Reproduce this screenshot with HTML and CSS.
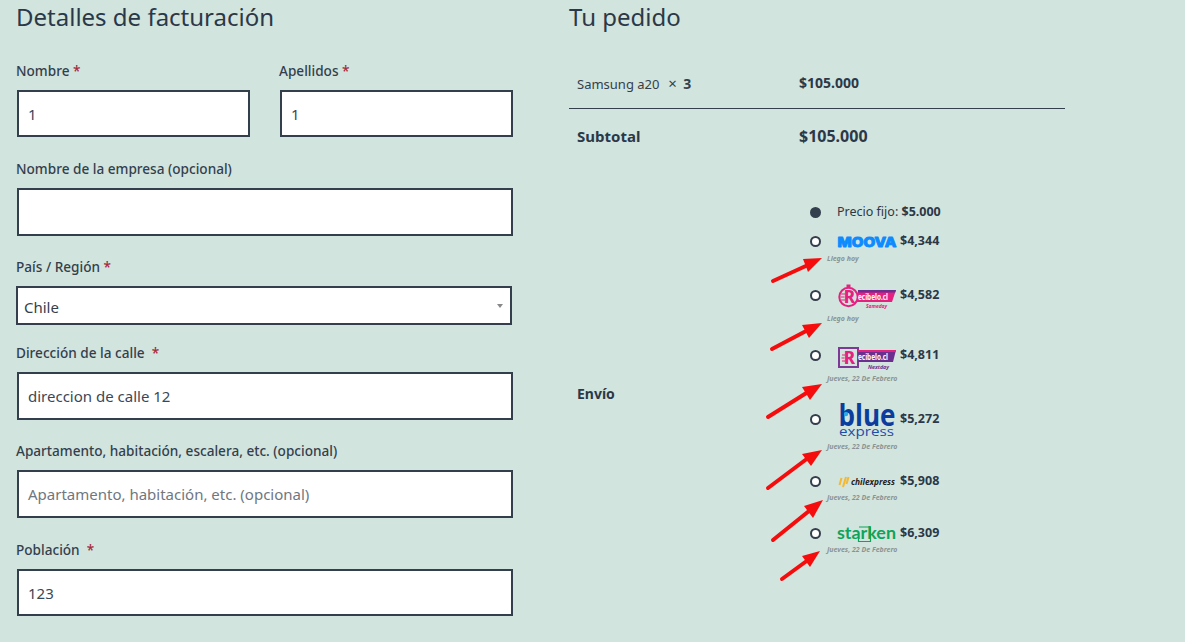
FILE: index.html
```html
<!DOCTYPE html>
<html lang="es">
<head>
<meta charset="utf-8">
<title>Finalizar compra</title>
<link rel="stylesheet" href="styles.css">
</head>
<body>
<main class="page">
  <section class="billing">
    <h2 class="title">Detalles de facturación</h2>
    <div class="fields">
      <div class="pair">
        <div class="field"><label>Nombre <span class="req">*</span></label><div class="input">1</div></div>
        <div class="field"><label>Apellidos <span class="req">*</span></label><div class="input">1</div></div>
      </div>
      <div class="field"><label>Nombre de la empresa (opcional)</label><div class="input"></div></div>
      <div class="field field-select"><label>País / Región <span class="req">*</span></label>
        <div class="select"><span>Chile</span><i class="caret"></i></div></div>
      <div class="field"><label>Dirección de la calle &nbsp;<span class="req">*</span></label><div class="input">direccion de calle 12</div></div>
      <div class="field"><label>Apartamento, habitación, escalera, etc. (opcional)</label><div class="input placeholder">Apartamento, habitación, etc. (opcional)</div></div>
      <div class="field"><label>Población &nbsp;<span class="req">*</span></label><div class="input">123</div></div>
    </div>
  </section>

  <section class="order">
    <h2 class="title">Tu pedido</h2>
    <table class="summary">
      <tr class="row-item">
        <td class="c-name">Samsung a20 &nbsp;<span class="times">×</span> <strong>3</strong></td>
        <td class="c-val"><strong>$105.000</strong></td>
      </tr>
      <tr class="row-sub">
        <th>Subtotal</th>
        <td class="c-val"><strong>$105.000</strong></td>
      </tr>
      <tr class="row-ship">
        <th>Envío</th>
        <td class="c-ship">
          <ul class="methods">
            <li class="m m-fixed">
              <div class="m-row"><span class="radio on"></span><span class="fixed">Precio fijo: <b>$5.000</b></span></div>
            </li>
            <li class="m m-moova">
              <div class="m-row"><span class="radio"></span>
                <svg class="logo" viewBox="0 0 60 20" width="60" height="20"><text class="t-moova" x="0.5" y="15.5" textLength="59" lengthAdjust="spacingAndGlyphs">MOOVA</text></svg>
                <span class="price">$4,344</span></div>
              <p class="eta">Llego hoy</p>
            </li>
            <li class="m m-same">
              <div class="m-row"><span class="radio"></span>
                <svg class="logo" viewBox="0 0 60 26" width="60" height="26">
                  <polygon points="21,8 59,8 55,20 20,20" fill="#e5217f"/>
                  <polygon points="21,8 59,8 58.2,10.5 21,10.5" fill="#6b2f8f"/>
                  <circle cx="11.5" cy="15" r="9.2" fill="#d2e4de" stroke="#e5217f" stroke-width="2"/>
                  <rect x="9.5" y="2.5" width="4" height="2.5" fill="#e5217f"/>
                  <path d="M4 12h4M3.500 15h4M4 18h4" fill="none" stroke="#e5217f" stroke-width="1"/>
                  <text class="t-r pink" x="12.500" y="21" text-anchor="middle">R</text>
                  <text class="t-rec" x="21" y="18" textLength="30" lengthAdjust="spacingAndGlyphs">ecibelo.cl</text>
                  <text class="t-day pink" x="29" y="26" textLength="21" lengthAdjust="spacingAndGlyphs">Sameday</text>
                </svg>
                <span class="price">$4,582</span></div>
              <p class="eta">Llego hoy</p>
            </li>
            <li class="m m-next">
              <div class="m-row"><span class="radio"></span>
                <svg class="logo" viewBox="0 0 60 26" width="60" height="26">
                  <rect x="2" y="6" width="19" height="19" fill="none" stroke="#7c3a96" stroke-width="2"/>
                  <polygon points="21,8 59,8 56,20 21,20" fill="#6b2f8f"/>
                  <polygon points="21,8 59,8 58.500,10 21,10" fill="#e5217f"/>
                  <path d="M5 13h3M4.500 16h3M5 19h3" fill="none" stroke="#e5217f" stroke-width="1"/>
                  <text class="t-r pink" x="12.500" y="22" text-anchor="middle">R</text>
                  <text class="t-rec" x="21" y="18" textLength="30" lengthAdjust="spacingAndGlyphs">ecibelo.cl</text>
                  <text class="t-day purple" x="31" y="27" textLength="21" lengthAdjust="spacingAndGlyphs">Nextday</text>
                </svg>
                <span class="price">$4,811</span></div>
              <p class="eta">Jueves, 22 De Febrero</p>
            </li>
            <li class="m m-blue">
              <div class="m-row"><span class="radio"></span>
                <svg class="logo" viewBox="0 0 60 38" width="60" height="38">
                  <text class="t-blue" x="1.500" y="26" textLength="57" lengthAdjust="spacingAndGlyphs">blue</text>
                  <circle cx="9" cy="14" r="2.200" fill="#29a9e8"/>
                  <text class="t-express" x="2" y="35.500" textLength="55" lengthAdjust="spacingAndGlyphs">express</text>
                </svg>
                <span class="price">$5,272</span></div>
              <p class="eta">Jueves, 22 De Febrero</p>
            </li>
            <li class="m m-chile">
              <div class="m-row"><span class="radio"></span>
                <svg class="logo" viewBox="0 0 60 20" width="60" height="20">
                  <path d="M2.500 14l2-7M6 16l3-10M9.500 13l2-7" fill="none" stroke="#f5b82e" stroke-width="2"/>
                  <text class="t-chile" x="14" y="13.500" textLength="44" lengthAdjust="spacingAndGlyphs">chilexpress</text>
                </svg>
                <span class="price">$5,908</span></div>
              <p class="eta">Jueves, 22 De Febrero</p>
            </li>
            <li class="m m-stark">
              <div class="m-row"><span class="radio"></span>
                <svg class="logo" viewBox="0 0 60 20" width="60" height="20">
                  <text class="t-stark" x="0" y="16" textLength="59" lengthAdjust="spacingAndGlyphs">starken</text>
                  <path d="M22 4H33.500V18.500H21.500V15" fill="none" stroke="#0ea45a" stroke-width="1.200"/>
                </svg>
                <span class="price">$6,309</span></div>
              <p class="eta">Jueves, 22 De Febrero</p>
            </li>
          </ul>
        </td>
      </tr>
    </table>
  </section>
</main>

<svg class="arrows" viewBox="0 0 1185 642" width="1185" height="642" aria-hidden="true">
  <g class="shaft">
    <path d="M773 281L808 265"/>
    <path d="M772 349L808 330"/>
    <path d="M768 417L808 392"/>
    <path d="M768 488L808 458"/>
    <path d="M773 540L809 511"/>
    <path d="M782 579L808 560"/>
  </g>
  <g class="head">
    <polygon points="822,258 803,259 808,272"/>
    <polygon points="822,323 802,325 809,338"/>
    <polygon points="822,384 802,387 810,400"/>
    <polygon points="822,450 802,454 811,466"/>
    <polygon points="823,500 804,506 813,518"/>
    <polygon points="820,551 802,556 810,567"/>
  </g>
</svg>
</body>
</html>
```
FILE: styles.css
```css
* { box-sizing: border-box; }
html, body { margin: 0; height: 642px; overflow: hidden; }
body {
  position: relative;
  background: #d2e4de;
  color: #333f4d;
  font-family: "Noto Sans", "Open Sans", sans-serif;
  font-size: 14px;
}
.page { display: flex; padding-left: 16px; }
.billing { width: 553px; flex: none; }
.order { width: 496px; flex: none; }
.title {
  margin: 0;
  height: 36px;
  font-size: 24px;
  font-weight: 400;
  line-height: 34px;
  color: #2b3848;
}
.fields { display: flex; flex-direction: column; width: 497px; padding-top: 23.9px; }
.pair { display: grid; grid-template-columns: 234px 234px; column-gap: 29px; }
.field { display: flex; flex-direction: column; margin-bottom: 20.85px; }
.field-select { margin-bottom: 16.9px; }
.field label {
  height: 24px;
  margin-bottom: 6px;
  font-size: 13.6px;
  font-weight: 500;
  line-height: 22px;
}
.req { color: #a5283b; }
.input {
  height: 47.4px;
  margin-left: 1px;
  padding-left: 9px;
  background: #fff;
  border: 2px solid #333f4d;
  font-size: 15px;
  line-height: 45px;
  color: #3c4756;
}
.placeholder { color: #6f7780; }
.select {
  display: flex;
  align-items: center;
  justify-content: space-between;
  height: 39px;
  width: 496px;
  padding: 2px 7px 0 6px;
  background: #fff;
  border: 2px solid #333f4d;
  font-size: 15px;
}
.caret {
  margin-top: -2px;
  border-top: 4px solid #888;
  border-left: 3px solid transparent;
  border-right: 3px solid transparent;
}
.summary { width: 496px; margin-top: 24px; border-collapse: collapse; table-layout: fixed; }
.summary th { width: 222px; padding: 0 0 0 8px; text-align: left; font-size: 14px; font-weight: 700; color: #2b3848; }
.summary td { padding: 0; }
.row-item { height: 48px; border-bottom: 1px solid #333f4d; }
.summary .c-name { width: 222px; padding: 0 0 2px 8px; font-size: 13px; }
.times { margin-left: 2px; margin-right: 3px; font-size: 15px; }
.c-name strong { font-size: 14px; font-weight: 700; }
.summary .c-val { padding-left: 8px; color: #2b3848; }
.summary .row-item .c-val { font-size: 14px; padding-bottom: 2px; }
.row-sub { height: 52px; }
.summary .row-sub th { font-size: 15px; padding-top: 4px; }
.summary .row-sub .c-val { font-size: 16px; padding-top: 4px; }
.row-ship { height: 466px; }
.c-ship { vertical-align: top; }
.methods { list-style: none; margin: 0; padding: 42px 0 0 19px; }
.m-row { display: flex; align-items: center; }
.radio {
  flex: none;
  width: 11px;
  height: 11px;
  margin-right: 16px;
  background: #fff;
  border: 2px solid #333f4d;
  border-radius: 50%;
}
.radio.on { background: #333f4d; }
.fixed { font-size: 12.5px; color: #2b3848; line-height: 20px; }
.logo { flex: none; display: block; margin-right: 3px; overflow: visible; }
.price { font-size: 12.5px; font-weight: 700; color: #2b3848; line-height: 14px; }
.eta {
  margin: 1px 0 0 17px;
  height: 10px;
  font-size: 7px;
  line-height: 12px;
  font-style: italic;
  font-weight: 700;
  color: #8a9494;
  white-space: nowrap;
}
.m-moova { margin-top: 9px; }
.m-moova .eta { margin-top: 2px; }
.m-same { margin-top: 19px; }
.m-same .eta { margin-top: 5px; }
.m-next { margin-top: 19px; }
.m-next .eta { margin-top: 5px; }
.m-blue { margin-top: 17px; }
.m-blue .eta { margin-top: 3px; }
.m-chile { margin-top: 20px; }
.m-stark { margin-top: 21px; }

.t-moova { font: 800 13px Inter, sans-serif; fill: #0d8bff; stroke: #0d8bff; stroke-width: 0.9; stroke-linejoin: round; }
.t-r { font: 800 17px "Noto Sans", sans-serif; }
.pink { fill: #e5217f; }
.purple { fill: #6b2f8f; }
.t-rec { font: 700 8px "Noto Sans", sans-serif; fill: #fff; }
.t-day { font: italic 700 5.5px "Noto Sans", sans-serif; }
.t-blue { font: 700 31px "Open Sans", sans-serif; fill: #0a3d9e; }
.t-express { font: 400 12.5px "Open Sans", sans-serif; fill: #1f4da8; }
.t-chile { font: italic 700 9.5px "Open Sans", sans-serif; fill: #222; }
.t-stark { font: 700 17px Lato, sans-serif; fill: #0ea45a; }

.arrows { position: absolute; left: 0; top: 0; pointer-events: none; }
.shaft path { fill: none; stroke: #f50d0d; stroke-width: 4; stroke-linecap: round; }
.head polygon { fill: #f50d0d; }
```
